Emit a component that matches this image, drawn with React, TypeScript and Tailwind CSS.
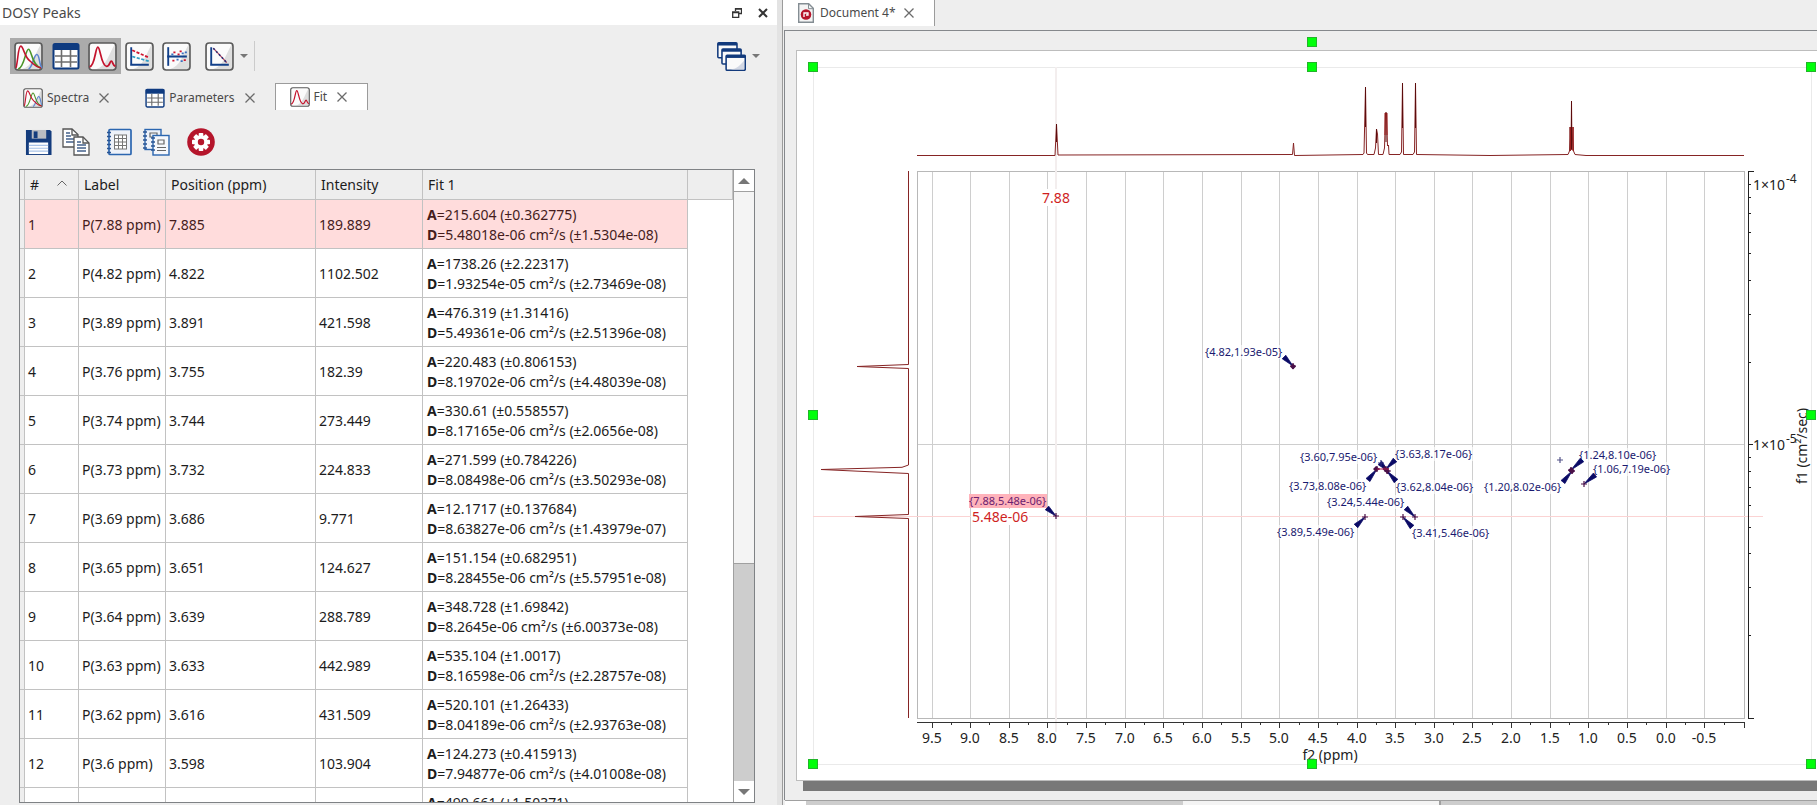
import type { ReactNode } from "react";
import { clsx } from "clsx";

type PeakRow = {
  id: string;
  label: string;
  position: string;
  intensity: string;
  a: string;
  d?: string;
};

type PeakLabel = {
  text: string;
  x: number;
  y: number;
  from: [number, number];
  to: [number, number];
  selected?: boolean;
};

const ROWS: PeakRow[] = [
  { id: "1", label: "P(7.88 ppm)", position: "7.885", intensity: "189.889", a: "215.604 (±0.362775)", d: "5.48018e-06 cm²/s (±1.5304e-08)" },
  { id: "2", label: "P(4.82 ppm)", position: "4.822", intensity: "1102.502", a: "1738.26 (±2.22317)", d: "1.93254e-05 cm²/s (±2.73469e-08)" },
  { id: "3", label: "P(3.89 ppm)", position: "3.891", intensity: "421.598", a: "476.319 (±1.31416)", d: "5.49361e-06 cm²/s (±2.51396e-08)" },
  { id: "4", label: "P(3.76 ppm)", position: "3.755", intensity: "182.39", a: "220.483 (±0.806153)", d: "8.19702e-06 cm²/s (±4.48039e-08)" },
  { id: "5", label: "P(3.74 ppm)", position: "3.744", intensity: "273.449", a: "330.61 (±0.558557)", d: "8.17165e-06 cm²/s (±2.0656e-08)" },
  { id: "6", label: "P(3.73 ppm)", position: "3.732", intensity: "224.833", a: "271.599 (±0.784226)", d: "8.08498e-06 cm²/s (±3.50293e-08)" },
  { id: "7", label: "P(3.69 ppm)", position: "3.686", intensity: "9.771", a: "12.1717 (±0.137684)", d: "8.63827e-06 cm²/s (±1.43979e-07)" },
  { id: "8", label: "P(3.65 ppm)", position: "3.651", intensity: "124.627", a: "151.154 (±0.682951)", d: "8.28455e-06 cm²/s (±5.57951e-08)" },
  { id: "9", label: "P(3.64 ppm)", position: "3.639", intensity: "288.789", a: "348.728 (±1.69842)", d: "8.2645e-06 cm²/s (±6.00373e-08)" },
  { id: "10", label: "P(3.63 ppm)", position: "3.633", intensity: "442.989", a: "535.104 (±1.0017)", d: "8.16598e-06 cm²/s (±2.28757e-08)" },
  { id: "11", label: "P(3.62 ppm)", position: "3.616", intensity: "431.509", a: "520.101 (±1.26433)", d: "8.04189e-06 cm²/s (±2.93763e-08)" },
  { id: "12", label: "P(3.6 ppm)", position: "3.598", intensity: "103.904", a: "124.273 (±0.415913)", d: "7.94877e-06 cm²/s (±4.01008e-08)" },
  { id: "", label: "", position: "", intensity: "", a: "499.661 (±1.50371)" },
];

const PEAKS: PeakLabel[] = [
  { text: "{7.88,5.48e-06}", x: 969, y: 505, from: [1047, 508], to: [1056, 516], selected: true },
  { text: "{4.82,1.93e-05}", x: 1205, y: 356, from: [1284, 357], to: [1293, 366] },
  { text: "{3.60,7.95e-06}", x: 1300, y: 461, from: [1380, 463], to: [1388, 471] },
  { text: "{3.63,8.17e-06}", x: 1395, y: 458, from: [1395, 460], to: [1386, 469] },
  { text: "{3.73,8.08e-06}", x: 1289, y: 490, from: [1368, 480], to: [1377, 469] },
  { text: "{3.62,8.04e-06}", x: 1396, y: 491, from: [1396, 481], to: [1387, 471] },
  { text: "{3.24,5.44e-06}", x: 1327, y: 506, from: [1406, 508], to: [1415, 517] },
  { text: "{3.89,5.49e-06}", x: 1277, y: 536, from: [1356, 526], to: [1365, 517] },
  { text: "{3.41,5.46e-06}", x: 1412, y: 537, from: [1412, 527], to: [1403, 517] },
  { text: "{1.24,8.10e-06}", x: 1579, y: 459, from: [1582, 460], to: [1571, 470] },
  { text: "{1.20,8.02e-06}", x: 1484, y: 491, from: [1563, 482], to: [1572, 471] },
  { text: "{1.06,7.19e-06}", x: 1593, y: 473, from: [1595, 475], to: [1584, 484] },
];

const HANDLES: [number, number][] = [
  [1312, 42], [813, 67], [1312, 67], [1811, 67],
  [813, 415], [1811, 415],
  [813, 764], [1312, 764], [1811, 764],
];

// Plot frame, in canvas units
const LEFT = 917;
const RIGHT = 1744;
const TOP = 171;
const BOTTOM = 718;

const ppmToX = (ppm: number) => Math.round(931.5 + (9.5 - ppm) * 77.28);
const decadeToY = (value: number) => Math.round(TOP - Math.log10(value / 1e-4) * 273.4);

const MAJOR_PPM = Array.from({ length: 21 }, (_, i) => 9.5 - i * 0.5);
const MINOR_PPM = Array.from({ length: 21 }, (_, i) => 9.25 - i * 0.5);
const LOG_TICKS = [1e-5, 1e-6].flatMap((d) => [2, 3, 4, 5, 6, 7, 8, 9].map((n) => n * d));

/* ---------- icons ---------- */

function Svg({ size, box = 28, children }: { size: number; box?: number; children: ReactNode }) {
  return (
    <svg width={size} height={size} viewBox={`0 0 ${box} ${box}`} fill="none" className="shrink-0" aria-hidden="true">
      {children}
    </svg>
  );
}

function Plate() {
  return (
    <>
      <rect x="1" y="1" width="26" height="26" rx="3" fill="#fbfbfb" />
      <path d="M26 2v24H8c10-3 11-12 18-24z" fill="#dedede" />
      <rect x="1" y="1" width="26" height="26" rx="3" stroke="#5a5a5a" strokeWidth="1.6" />
    </>
  );
}

function SpectraIcon({ size }: { size: number }) {
  return (
    <Svg size={size}>
      <Plate />
      <path d="M14 26c4-1 5-14 8-14s2 10 5 13" stroke="#5b84cf" strokeWidth="1.500" />
      <path d="M4 26C10 25 11 7 14 7s3 16 12 18" stroke="#4b9428" strokeWidth="1.500" />
      <path d="M2 25C4 17 4 4 6.500 4S10 14 15 18s5 6 11 7" stroke="#c4122c" strokeWidth="1.500" />
    </Svg>
  );
}

function GridIcon({ size }: { size: number }) {
  return (
    <Svg size={size}>
      <rect x="1.500" y="2" width="25" height="24.500" rx="1.500" fill="#fff" stroke="#0f3b80" strokeWidth="2" />
      <path d="M1 2h26v6H1z" fill="#0f3b80" />
      <path d="M3 14h22M3 20h22M9.500 8v17M18.500 8v17" stroke="#6d6d6d" strokeWidth="1.600" />
    </Svg>
  );
}

function FitIcon({ size }: { size: number }) {
  return (
    <Svg size={size}>
      <Plate />
      <path d="M1.500 24C7 23 7 5 9.500 5s3 18 8.500 18.500c3 0 3-5 4.500-5s1 4 4 5" stroke="#c4122c" strokeWidth="1.700" />
    </Svg>
  );
}

function DecayIcon() {
  return (
    <Svg size={29}>
      <Plate />
      <path d="M6 5v18M5 22h18" stroke="#12408a" strokeWidth="1.800" />
      <path d="M7 8l16 7" stroke="#d01530" strokeWidth="1.700" strokeDasharray="3 1.500" />
      <path d="M7 14l16 4.500" stroke="#2d9bc4" strokeWidth="1.700" strokeDasharray="3 1.500" />
    </Svg>
  );
}

function ResidualIcon() {
  return (
    <Svg size={29}>
      <Plate />
      <path d="M6 5v18" stroke="#12408a" strokeWidth="1.800" />
      <path d="M5 14h19" stroke="#12408a" strokeWidth="2" />
      <path d="M11 10h2M17 9h2M10 18h2M21 17.500h2M15 12h2" stroke="#d01530" strokeWidth="1.800" />
      <path d="M14 17h2M22 10h2M18 18.500h2M9 12h2M19 11h2" stroke="#3a6fc0" strokeWidth="1.800" />
    </Svg>
  );
}

function SlopeIcon() {
  return (
    <Svg size={29}>
      <Plate />
      <path d="M6 5v18M5 22h18" stroke="#12408a" strokeWidth="1.800" />
      <path d="M8 6l13 14" stroke="#b5405a" strokeWidth="1.100" />
      <path d="M8 6l13 14" stroke="#2a2f74" strokeWidth="1.500" strokeDasharray="2 2" />
    </Svg>
  );
}

function WindowsIcon() {
  return (
    <Svg size={29}>
      {[0, 1, 2].map((n) => (
        <g key={n}>
          <rect x={0.8 + n * 4} y={0.8 + n * 6} width="18.500" height="14.500" rx="1" fill="#fafafa" stroke="#123a7c" strokeWidth="1.500" />
          <path d={`M${0.8 + n * 4} ${0.8 + n * 6}h18.500v2.600h-18.500z`} fill="#123a7c" />
        </g>
      ))}
      <path d="M26 18v8.500H13c7-1 9-4 13-8.500z" fill="#d3d8e4" />
    </Svg>
  );
}

function SaveIcon() {
  return (
    <Svg size={27}>
      <path d="M1 1h25l1.500 1.500V27H1z" fill="#143c7d" />
      <path d="M7 1h15v9H7z" fill="#b9bcc2" />
      <path d="M9 2.500h4v7H9z" fill="#143c7d" />
      <path d="M4 14h20v12H4z" fill="#fff" />
      <path d="M4 17h20M4 20h20M4 23h20" stroke="#a9c3e8" strokeWidth="1.200" />
    </Svg>
  );
}

function CopyIcon() {
  return (
    <Svg size={28}>
      <path d="M1 1h9l6 5.500V19H1z" fill="#fff" stroke="#555" strokeWidth="1.300" />
      <path d="M10 1v6h6" stroke="#555" strokeWidth="1.300" />
      <path d="M4 5h4M4 8h5M4 11h9M4 14h9" stroke="#44618c" strokeWidth="1.300" />
      <path d="M12 9h9l6 6v12H12z" fill="#fff" stroke="#555" strokeWidth="1.300" />
      <path d="M21 9v6h6" stroke="#555" strokeWidth="1.300" />
      <path d="M15 14h4M15 17h9M15 20h9M15 23h9" stroke="#44618c" strokeWidth="1.300" />
    </Svg>
  );
}

function NotebookTableIcon() {
  return (
    <Svg size={28}>
      <rect x="4" y="1.500" width="22" height="25" rx="1" fill="#eef2f9" stroke="#2b66b0" strokeWidth="1.700" />
      <path d="M2 4.500h4M2 8.500h4M2 12.500h4M2 16.500h4M2 20.500h4M2 24.500h4" stroke="#2b5592" strokeWidth="1.600" />
      <rect x="9.500" y="7" width="12" height="14" fill="#fff" stroke="#777" />
      <path d="M9.500 10.500h12M9.500 14h12M9.500 17.500h12M13.500 7v14M17.500 7v14" stroke="#777" />
    </Svg>
  );
}

function NotebooksIcon() {
  return (
    <Svg size={28}>
      <rect x="3" y="1.500" width="16" height="20" fill="#eef2f9" stroke="#2b66b0" strokeWidth="1.400" />
      <path d="M1 4h4M1 8h4M1 12h4M1 16h4M1 20h4" stroke="#2b5592" strokeWidth="1.400" />
      <path d="M8 5h7v4H8z" stroke="#666" strokeWidth="1.200" />
      <rect x="11" y="7.500" width="16" height="19.500" fill="#f6f8fc" stroke="#2b66b0" strokeWidth="1.400" />
      <path d="M9 10h4M9 14h4M9 18h4M9 22h4" stroke="#2b5592" strokeWidth="1.400" />
      <path d="M16 12h6v4h-6zM15 19.500h9M15 22.500h9" stroke="#666" strokeWidth="1.200" />
    </Svg>
  );
}

function GearIcon() {
  return (
    <Svg size={28}>
      <circle cx="14" cy="14" r="13.800" fill="#b5152b" />
      {[0, 45, 90, 135].map((a) => (
        <rect key={a} x="11.700" y="5" width="4.600" height="18" rx="0.800" fill="#fff" transform={`rotate(${a} 14 14)`} />
      ))}
      <circle cx="14" cy="14" r="6.800" fill="#fff" />
      <circle cx="14" cy="14" r="3.200" fill="#b5152b" />
    </Svg>
  );
}

function DocumentIcon() {
  return (
    <svg width="16" height="20" viewBox="0 0 16 20" fill="none" className="shrink-0" aria-hidden="true">
      <path d="M0.700 0.700h10l4.600 4.600v14H0.700z" fill="#f4f4f4" stroke="#848d93" strokeWidth="1.400" />
      <path d="M10.500 0.700v5h5" stroke="#848d93" />
      <circle cx="8" cy="11.500" r="5.300" fill="#b5152b" />
      <path d="M6 14v-4h4v2H8" stroke="#fff" strokeWidth="1.300" />
    </svg>
  );
}

function CloseMark() {
  return (
    <Svg size={10} box={10}>
      <path d="M0.500 0.500l9 9M9.500 0.500l-9 9" stroke="#6b6b6b" strokeWidth="1.300" />
    </Svg>
  );
}

function Caret() {
  return <span className="border-x-4 border-t-4 border-x-transparent border-t-[#777]" />;
}

function Separator() {
  return <span className="h-[30px] w-px bg-[#cbcbcb]" />;
}

/* ---------- left dock ---------- */

function ToolButton({ label, active, children }: { label: string; active?: boolean; children: ReactNode }) {
  return (
    <button
      type="button"
      aria-label={label}
      aria-pressed={active}
      className={clsx("flex h-9 w-[37px] items-center justify-center", active && "bg-[#ababab]")}
    >
      {children}
    </button>
  );
}

function PanelTab({ label, active, icon }: { label: string; active?: boolean; icon: ReactNode }) {
  return (
    <div
      className={clsx(
        "flex items-center",
        active ? "h-[27px] border border-b-0 border-[#9b9b9b] bg-white pr-5 pl-3.5" : "h-[29px] px-2"
      )}
    >
      <button type="button" className="flex items-center gap-1 text-xs text-[#4a4a4a]">
        {icon}
        {label}
      </button>
      <button type="button" aria-label={`Close ${label}`} className="ml-2.5">
        <CloseMark />
      </button>
    </div>
  );
}

function PeakTable() {
  const head = "h-[30px] border-r border-b border-[#c2c2c2] bg-[#eee] pt-px pl-[5px] text-left font-normal";
  const cell = "h-[49px] border-r border-b border-[#c2c2c2] pt-px pl-[3px]";
  return (
    <table className="w-full table-fixed border-separate border-spacing-0 text-sm whitespace-nowrap text-[#1c1c1c]">
      <colgroup>
        <col className="w-[5px]" />
        <col className="w-[54px]" />
        <col className="w-[87px]" />
        <col className="w-[150px]" />
        <col className="w-[107px]" />
        <col className="w-[265px]" />
        <col />
      </colgroup>
      <thead>
        <tr>
          <td className="border-r border-b border-[#c2c2c2] bg-[#eee]" />
          <th scope="col" className={head}>
            <span className="flex items-center justify-between pr-[11px]">
              #
              <svg width="10" height="6" viewBox="0 0 10 6" fill="none" className="mb-1" aria-hidden="true">
                <path d="M0.500 5.500L5 1l4.500 4.500" stroke="#666" />
              </svg>
            </span>
          </th>
          <th scope="col" className={head}>Label</th>
          <th scope="col" className={head}>Position (ppm)</th>
          <th scope="col" className={head}>Intensity</th>
          <th scope="col" className={head}>Fit 1</th>
          <td className="border-r border-b border-[#c2c2c2] bg-[#eee]" />
        </tr>
      </thead>
      <tbody>
        {ROWS.map((row, i) => (
          <tr key={i} className={i === 0 ? "text-[#451c1c]" : undefined}>
            <td className="border-r border-b border-[#c2c2c2] bg-[#eee]" />
            <td className={clsx(cell, i === 0 && "bg-[#ffdcdc]")}>{row.id}</td>
            <td className={clsx(cell, i === 0 && "bg-[#ffdcdc]")}>{row.label}</td>
            <td className={clsx(cell, i === 0 && "bg-[#ffdcdc]")}>{row.position}</td>
            <td className={clsx(cell, i === 0 && "bg-[#ffdcdc]")}>{row.intensity}</td>
            <td
              className={clsx(
                "h-[49px] border-r border-b border-[#c2c2c2] pt-[5px] pl-1 align-top leading-5",
                i === 0 && "bg-[#ffdcdc]"
              )}
            >
              <div><b>A</b>={row.a}</div>
              {row.d && <div><b>D</b>={row.d}</div>}
            </td>
            <td />
          </tr>
        ))}
      </tbody>
    </table>
  );
}

function VerticalScroll() {
  return (
    <div className="flex w-[21px] shrink-0 flex-col border-l border-[#a0a0a0] bg-[#cdcdcd]">
      <button type="button" aria-label="Scroll up" className="flex h-[21px] items-center justify-center bg-white">
        <span className="border-x-[6px] border-b-[6px] border-x-transparent border-b-[#777]" />
      </button>
      <div className="h-[59%] border-y border-[#a0a0a0] bg-[#f4f4f4]" />
      <button type="button" aria-label="Scroll down" className="mt-auto flex h-[21px] items-center justify-center bg-white">
        <span className="border-x-[6px] border-t-[6px] border-x-transparent border-t-[#777]" />
      </button>
    </div>
  );
}

function PeaksDock() {
  return (
    <aside className="flex w-[777px] shrink-0 flex-col">
      <header className="flex h-[25px] items-center bg-white pr-[9px] pl-0.5">
        <h1 className="flex-1 text-sm text-[#4a4a4a]">DOSY Peaks</h1>
        <button type="button" aria-label="Float panel" className="mr-4">
          <Svg size={10} box={10}>
            <path d="M3.500 3V0.500h6v5H7M3 1h7" stroke="#333" strokeWidth="1.300" />
            <path d="M0.700 4h6v5.300h-6zM0 4.500h7" stroke="#333" strokeWidth="1.300" />
          </Svg>
        </button>
        <button type="button" aria-label="Close panel">
          <Svg size={10} box={10}>
            <path d="M1 1l8 8M9 1l-8 8" stroke="#333" strokeWidth="2" />
          </Svg>
        </button>
      </header>

      {/* Main toolbar */}
      <div className="mt-[13px] flex items-center pr-[17px] pl-2.5">
        <ToolButton label="Spectra" active><SpectraIcon size={29} /></ToolButton>
        <ToolButton label="Parameters" active><GridIcon size={28} /></ToolButton>
        <ToolButton label="Fit" active><FitIcon size={29} /></ToolButton>
        <ToolButton label="Decay plot"><DecayIcon /></ToolButton>
        <ToolButton label="Residuals"><ResidualIcon /></ToolButton>
        <span className="mx-[3px]"><Separator /></span>
        <ToolButton label="Fit model"><SlopeIcon /></ToolButton>
        <button type="button" aria-label="Fit model options" className="mr-1.5 ml-0.5 flex h-9 items-center">
          <Caret />
        </button>
        <Separator />
        <button type="button" aria-label="Windows" className="ml-auto flex h-9 items-center gap-1.5">
          <WindowsIcon />
          <Caret />
        </button>
      </div>

      {/* Tabs */}
      <div className="mt-[9px] flex items-start pl-[15px]">
        <PanelTab label="Spectra" icon={<SpectraIcon size={20} />} />
        <div className="mr-3 ml-5">
          <PanelTab label="Parameters" icon={<GridIcon size={20} />} />
        </div>
        <PanelTab label="Fit" active icon={<FitIcon size={20} />} />
      </div>

      {/* Fit toolbar */}
      <div className="mt-3 flex h-9 items-center pl-5">
        <ToolButton label="Save"><SaveIcon /></ToolButton>
        <ToolButton label="Copy"><CopyIcon /></ToolButton>
        <span className="mx-[3px]"><Separator /></span>
        <ToolButton label="Report table"><NotebookTableIcon /></ToolButton>
        <ToolButton label="Report pages"><NotebooksIcon /></ToolButton>
        <span className="mx-1"><Separator /></span>
        <ToolButton label="Settings"><GearIcon /></ToolButton>
      </div>

      <div className="mt-[9px] mr-[22px] mb-0.5 ml-[19px] flex min-h-0 flex-1 border border-[#7f8285] bg-white">
        <div className="min-w-0 flex-1 overflow-hidden">
          <PeakTable />
        </div>
        <VerticalScroll />
      </div>
    </aside>
  );
}

/* ---------- spectrum ---------- */

function wedge([x1, y1]: [number, number], [x2, y2]: [number, number]) {
  const len = Math.hypot(x2 - x1, y2 - y1);
  const nx = ((y1 - y2) / len) * 2.5;
  const ny = ((x2 - x1) / len) * 2.5;
  return `${x1 + nx},${y1 + ny} ${x1 - nx},${y1 - ny} ${x2},${y2}`;
}

function Cross({ x, y, color = "#4a1048" }: { x: number; y: number; color?: string }) {
  return <path d={`M${x - 3} ${y}h6M${x} ${y - 3}v6`} stroke={color} strokeWidth="1.200" />;
}

function Spectrum() {
  return (
    <svg
      width="1020"
      height="729"
      viewBox="797 51 1020 729"
      className="block overflow-visible text-sm"
      role="img"
      aria-label="DOSY spectrum"
    >
      <g shapeRendering="crispEdges" fill="none">
        <rect x="813" y="67" width="998" height="697" stroke="#eaeaea" />

        {/* Grid */}
        {MAJOR_PPM.map((p) => (
          <path key={p} d={`M${ppmToX(p)} ${TOP}V${BOTTOM}`} stroke="#cecece" />
        ))}
        <path d={`M${LEFT} 444H${RIGHT}`} stroke="#cecece" />
        <rect x={LEFT} y={TOP} width={RIGHT - LEFT} height={BOTTOM - TOP} stroke="#b8b8b8" />

        {/* Cursor */}
        <path d="M1056 67V732" stroke="#f3eeee" strokeWidth="2" />
        <path d="M813 516H1763" stroke="#fbd3d3" />

        {/* Bottom axis */}
        <path d={`M${LEFT} 722H${RIGHT}v6`} stroke="#333" />
        {MAJOR_PPM.map((p) => (
          <path key={p} d={`M${ppmToX(p)} 722v6`} stroke="#333" />
        ))}
        {MINOR_PPM.map((p) => (
          <path key={p} d={`M${ppmToX(p)} 722v3`} stroke="#333" />
        ))}

        {/* Right axis */}
        <path d={`M1754 ${TOP}h-6V${BOTTOM}h6M1748 444h5`} stroke="#222" />
        {LOG_TICKS.map((v) => (
          <path key={v} d={`M1748 ${decadeToY(v)}h3`} stroke="#222" />
        ))}
      </g>

      {/* Projections */}
      <g fill="none" stroke="#862424" strokeLinejoin="bevel">
        <path d="M917 155.500H1055L1056.500 124L1058 155L1292.500 154.500L1293.500 143L1294.500 155.500L1363 154.500L1364 153L1365.500 87L1366.500 153L1367.500 154.500H1374L1375.500 148L1376.500 129L1377.500 134L1378.500 154.500H1383L1384.500 148L1385.500 113H1386.500L1387.500 146L1388.500 145L1389 154.500H1400L1401.500 152L1402.500 83L1403.500 154.500H1413L1414.500 152L1415.500 83L1416.500 154.500L1490 155.500L1568 154.500L1569.500 151L1570 127L1571 150L1571.500 101L1572 150L1573 127L1573.500 151L1575 154.500L1586 155.500H1744" />
        <path d="M1056.500 124v18M1365.500 87v40M1376.500 129v14M1386 112v30M1402.500 83v45M1415.500 83v45M1571.500 101v48" stroke="#5c0c0c" />
        <path d="M1570.500 127v24M1573 127v24M1385 113v22M1387 113v22" stroke="#9b1c1c" />
        <path d="M908.500 171V364.500L857 366.500L908.500 368.500V465L902 467.300L821 469.500L908.500 473.500V514.500L855 516.500L908.500 518.500V718" />
      </g>

      {/* Axis text */}
      <g fill="#222">
        {MAJOR_PPM.filter((p) => p > -1).map((p) => (
          <text key={p} x={ppmToX(p)} y="743" textAnchor="middle">{p.toFixed(1)}</text>
        ))}
        <text x="1330" y="760" textAnchor="middle">f2 (ppm)</text>
        <text x="1753" y="190">1×10</text>
        <text x="1786" y="183" className="text-xs">-4</text>
        <text x="1753" y="450">1×10</text>
        <text x="1786" y="443" className="text-xs">-5</text>
        <text x="1807" y="446" textAnchor="middle" transform="rotate(-90 1807 446)">f1 (cm²/sec)</text>
      </g>

      {/* Cursor readout */}
      <rect x="1042" y="189" width="30" height="17" fill="#fff" />
      <rect x="971" y="509" width="58" height="16" fill="#fff" />
      <g fill="#cf1f1f">
        <text x="1056" y="203" textAnchor="middle">7.88</text>
        <text x="972" y="522">5.48e-06</text>
      </g>

      {/* Peak labels */}
      {PEAKS.map((p) => (
        <g key={p.text}>
          <rect x={p.x} y={p.y - 11} width="78" height="14" fill={p.selected ? "#ffb3bb" : "#fff"} fillOpacity={p.selected ? 1 : 0.6} />
          <text x={p.x} y={p.y} className="text-[11px]" fill={p.selected ? "#6b2070" : "#1a1a70"}>{p.text}</text>
          <polygon points={wedge(p.from, p.to)} fill="#0a0a66" stroke="#0a0a66" strokeWidth="0.800" />
          <Cross x={p.to[0]} y={p.to[1]} />
        </g>
      ))}
      <path d="M1293 363.500l3 3-3 3-3-3zM1376 466l3.500 3-3.500 3-3-3zM1384 466l5.500 5-2 3-5-5zM1571 467l4 4-3 3-4-3.500z" fill="#4a1048" />
      <path d="M1377 469h12" stroke="#b01c50" />
      <Cross x={1381} y={463} color="#2a2a7a" />
      <Cross x={1560} y={460} color="#55558a" />

      {/* Selection handles */}
      {HANDLES.map(([x, y]) => (
        <rect key={`${x}-${y}`} x={x - 4.5} y={y - 4.5} width="9" height="9" fill="#00ff0a" stroke="#22b52a" />
      ))}
    </svg>
  );
}

function DocumentArea() {
  return (
    <main className="flex min-w-0 flex-1 flex-col">
      <div className="flex h-[30px] items-start pr-4">
        <div className="flex h-[26px] items-center border-r border-[#9b9b9b] bg-white pr-5 pl-[15px]">
          <button type="button" className="flex items-center gap-1.5 text-xs text-[#4a4a4a]">
            <DocumentIcon />
            Document 4*
          </button>
          <button type="button" aria-label="Close Document 4" className="ml-2">
            <CloseMark />
          </button>
        </div>
      </div>

      <div className="ml-px flex min-h-0 flex-1 flex-col overflow-hidden border-t border-l border-[#85888c]">
        <div className="mt-[19px] mb-[19px] ml-[11px] min-h-0 flex-1 border border-r-0 border-[#bdbdbd] bg-white shadow-[7px_10px_0_#787878]">
          <Spectrum />
        </div>
      </div>

      {/* Horizontal scroll bar */}
      <div className="ml-0.5 flex h-[5px] shrink-0 border-t border-[#a0a0a0] bg-[#cdcdcd]">
        <span className="w-[21px] bg-white" />
        <span className="ml-[36.5%] w-1/4 border-r-2 border-[#a0a0a0] bg-[#f4f4f4]" />
      </div>
    </main>
  );
}

export default function App() {
  return (
    <div className="flex h-screen overflow-hidden bg-[#eee] font-['Noto_Sans','Open_Sans',sans-serif]">
      <PeaksDock />
      <div className="w-1.5 shrink-0 border-r border-[#9b9b9b] bg-[#e3e3e3]" />
      <DocumentArea />
    </div>
  );
}
